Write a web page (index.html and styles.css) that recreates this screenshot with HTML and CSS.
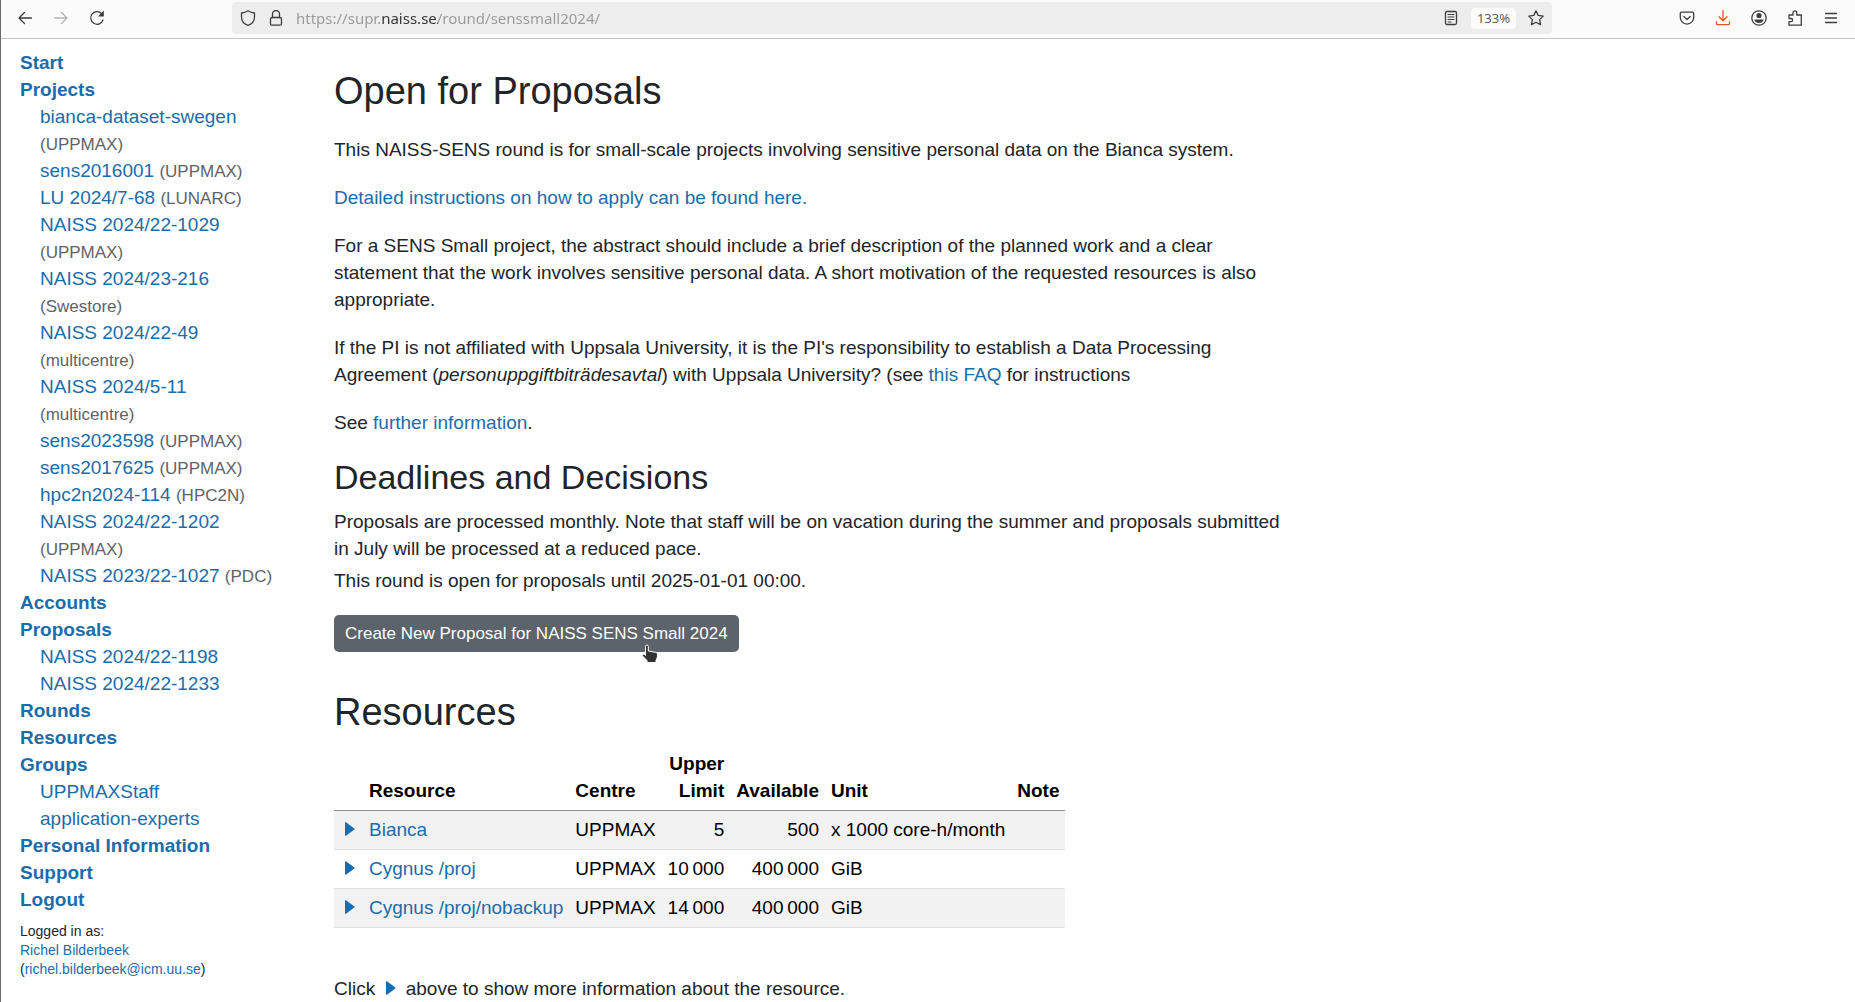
FILE: index.html
```html
<!DOCTYPE html>
<html lang="en">
<head>
    <meta charset="UTF-8">
    <meta name="viewport" content="width=device-width, initial-scale=1.0">
    <title>Open for Proposals</title>
    <link rel="stylesheet" href="styles.css">
</head>
<body>
    <header class="toolbar">
        <div class="nav-buttons">
            <button type="button" aria-label="Back"><svg viewBox="0 0 16 16"><path d="M14.500 8H2M7.500 2.500L2 8l5.500 5.500"/></svg></button>
            <button type="button" aria-label="Forward" disabled><svg viewBox="0 0 16 16"><path d="M1.500 8H14M8.500 2.500L14 8l-5.500 5.500"/></svg></button>
            <button type="button" aria-label="Reload"><svg viewBox="0 0 16 16"><path d="M14 10A6.300 6.300 0 1 1 12.500 3.500"/><path class="solid" d="M14.800.5v6H9z"/></svg></button>
        </div>
        <div class="urlbar">
            <svg viewBox="0 0 16 16"><path d="M8 .8c2 1.500 4 2 6.500 2.200v4c0 3.500-2.500 7-6.500 8.300C4 14 1.500 10.500 1.500 7V3C4 2.800 6 2.300 8 .8z"/></svg>
            <svg viewBox="0 0 16 16"><rect x="2.500" y="7.500" width="11" height="7.700" rx="1.500"/><path d="M4.500 7.500V4a3.500 3.500 0 0 1 7 0v3.500"/></svg>
            <input type="text" class="url" aria-label="Address" value="https://supr.naiss.se/round/senssmall2024/">
            <button type="button" aria-label="Reader view"><svg viewBox="0 0 16 16"><rect x="2.500" y="1.500" width="11" height="13" rx="1.500"/><path class="thin" d="M5 4.500h6M5 7h6M5 9.500h6M5 12h3"/></svg></button>
            <button type="button" class="zoom">133%</button>
            <button type="button" aria-label="Bookmark"><svg viewBox="0 0 16 16"><path d="M8 .8l2.200 4.600 5 .7-3.600 3.500.9 5L8 12.200l-4.500 2.400.9-5L.8 6.100l5-.7z"/></svg></button>
        </div>
        <div class="tools">
            <button type="button" aria-label="Save to Pocket"><svg viewBox="0 0 16 16"><path d="M2.500 2.200h11c.7 0 1.200.5 1.200 1.200v4a6.700 6.700 0 0 1-13.400 0v-4c0-.7.500-1.200 1.200-1.200zM4.800 6.500L8 9.500l3.200-3"/></svg></button>
            <button type="button" class="download" aria-label="Downloads"><svg viewBox="0 0 16 16"><path d="M8 .5v10M4 6.800l4 4 4-4M1.500 12v1.500c0 .8.500 1.200 1.200 1.200h10.600c.7 0 1.200-.4 1.200-1.200V12"/></svg></button>
            <button type="button" aria-label="Account"><svg viewBox="0 0 16 16"><circle cx="8" cy="8" r="7.200"/><circle class="solid" cx="8" cy="5.500" r="2.600"/><path class="solid" d="M3.500 9.500h9c0 2-2 3.500-4.500 3.500s-4.500-1.500-4.500-3.500z"/></svg></button>
            <button type="button" aria-label="Extensions"><svg viewBox="0 0 16 16"><path d="M2 15.200v-3.500h2a1.600 1.600 0 0 0 0-3.200H2V5h4V2.800a1.900 1.900 0 0 1 3.800 0V5h4.500v10.200z"/></svg></button>
            <button type="button" aria-label="Menu"><svg viewBox="0 0 16 16"><path d="M2.500 3.500h11M2.500 8h11M2.500 12.500h11"/></svg></button>
        </div>
    </header>

    <div class="page">
        <nav class="sidebar">
            <ul>
                <li><a href="#">Start</a></li>
                <li>
                    <a href="#">Projects</a>
                    <ul>
                        <li><a href="#">bianca-dataset-swegen</a> <small>(UPPMAX)</small></li>
                        <li><a href="#">sens2016001</a> <small>(UPPMAX)</small></li>
                        <li><a href="#">LU 2024/7-68</a> <small>(LUNARC)</small></li>
                        <li><a href="#">NAISS 2024/22-1029</a> <small>(UPPMAX)</small></li>
                        <li><a href="#">NAISS 2024/23-216</a> <small>(Swestore)</small></li>
                        <li><a href="#">NAISS 2024/22-49</a> <small>(multicentre)</small></li>
                        <li><a href="#">NAISS 2024/5-11</a> <small>(multicentre)</small></li>
                        <li><a href="#">sens2023598</a> <small>(UPPMAX)</small></li>
                        <li><a href="#">sens2017625</a> <small>(UPPMAX)</small></li>
                        <li><a href="#">hpc2n2024-114</a> <small>(HPC2N)</small></li>
                        <li><a href="#">NAISS 2024/22-1202</a> <small>(UPPMAX)</small></li>
                        <li><a href="#">NAISS 2023/22-1027</a> <small>(PDC)</small></li>
                    </ul>
                </li>
                <li><a href="#">Accounts</a></li>
                <li>
                    <a href="#">Proposals</a>
                    <ul>
                        <li><a href="#">NAISS 2024/22-1198</a></li>
                        <li><a href="#">NAISS 2024/22-1233</a></li>
                    </ul>
                </li>
                <li><a href="#">Rounds</a></li>
                <li><a href="#">Resources</a></li>
                <li>
                    <a href="#">Groups</a>
                    <ul>
                        <li><a href="#">UPPMAXStaff</a></li>
                        <li><a href="#">application-experts</a></li>
                    </ul>
                </li>
                <li><a href="#">Personal Information</a></li>
                <li><a href="#">Support</a></li>
                <li><a href="#">Logout</a></li>
            </ul>
            <div class="login">
                Logged in as:<br>
                <a href="#">Richel Bilderbeek</a><br>
                (<a href="#">richel.bilderbeek@icm.uu.se</a>)
            </div>
        </nav>

        <main class="content">
            <h1>Open for Proposals</h1>
            <p>This NAISS-SENS round is for small-scale projects involving sensitive personal data on the Bianca system.</p>
            <p><a href="#">Detailed instructions on how to apply can be found here.</a></p>
            <p>For a SENS Small project, the abstract should include a brief description of the planned work and a clear statement that the work involves sensitive personal data. A short motivation of the requested resources is also appropriate.</p>
            <p>If the PI is not affiliated with Uppsala University, it is the PI's responsibility to establish a Data Processing Agreement (<em>personuppgiftbiträdesavtal</em>) with Uppsala University? (see <a href="#">this FAQ</a> for instructions</p>
            <p>See <a href="#">further information</a>.</p>

            <h2>Deadlines and Decisions</h2>
            <p class="tight">Proposals are processed monthly. Note that staff will be on vacation during the summer and proposals submitted in July will be processed at a reduced pace.</p>
            <p>This round is open for proposals until 2025-01-01 00:00.</p>

            <button type="button" class="create">
                Create New Proposal for NAISS SENS Small 2024
                <svg class="pointer" viewBox="0 0 18 20"><path d="M4.500 2.200C4.500.6 7.300.6 7.300 2.200V7l7.200 1.300c1.400.3 2 1 2 2.400 0 2.500-.5 4-1.500 5.500V18.500H6v-2L1.500 12c-.8-1.200.8-2.400 2-1.500l1 1z"/></svg>
            </button>

            <h1>Resources</h1>
            <table class="resources">
                <thead>
                    <tr>
                        <th></th>
                        <th>Resource</th>
                        <th>Centre</th>
                        <th class="num">Upper<br>Limit</th>
                        <th class="num">Available</th>
                        <th>Unit</th>
                        <th>Note</th>
                    </tr>
                </thead>
                <tbody>
                    <tr>
                        <td><button type="button" class="expand" aria-label="Show Bianca"><svg class="caret" viewBox="0 0 10 14"><path d="M0 1Q0 0 1 .3L9.300 6.500q.6.500 0 1L1 13.700Q0 14 0 13z"/></svg></button></td>
                        <td><a href="#">Bianca</a></td>
                        <td>UPPMAX</td>
                        <td class="num">5</td>
                        <td class="num">500</td>
                        <td>x 1000 core-h/month</td>
                        <td></td>
                    </tr>
                    <tr>
                        <td><button type="button" class="expand" aria-label="Show Cygnus /proj"><svg class="caret" viewBox="0 0 10 14"><path d="M0 1Q0 0 1 .3L9.300 6.500q.6.500 0 1L1 13.700Q0 14 0 13z"/></svg></button></td>
                        <td><a href="#">Cygnus /proj</a></td>
                        <td>UPPMAX</td>
                        <td class="num">10&#8201;000</td>
                        <td class="num">400&#8201;000</td>
                        <td>GiB</td>
                        <td></td>
                    </tr>
                    <tr>
                        <td><button type="button" class="expand" aria-label="Show Cygnus /proj/nobackup"><svg class="caret" viewBox="0 0 10 14"><path d="M0 1Q0 0 1 .3L9.300 6.500q.6.500 0 1L1 13.700Q0 14 0 13z"/></svg></button></td>
                        <td><a href="#">Cygnus /proj/nobackup</a></td>
                        <td>UPPMAX</td>
                        <td class="num">14&#8201;000</td>
                        <td class="num">400&#8201;000</td>
                        <td>GiB</td>
                        <td></td>
                    </tr>
                </tbody>
            </table>
            <p class="hint">Click <svg class="caret" viewBox="0 0 10 14"><path d="M0 1Q0 0 1 .3L9.300 6.500q.6.500 0 1L1 13.700Q0 14 0 13z"/></svg> above to show more information about the resource.</p>
        </main>
    </div>
</body>
</html>
```

FILE: styles.css
```css
* {
    box-sizing: border-box;
}

body {
    margin: 0;
    height: 100vh;
    display: flex;
    flex-direction: column;
    overflow: hidden;
    border-left: 1px solid #6f696c;
    background-color: #fff;
    color: #212529;
    font-family: "Liberation Sans", Arial, sans-serif;
    font-size: 19px;
    line-height: 27px;
}

a {
    color: #1b6cab;
    text-decoration: none;
}

a:hover {
    text-decoration: underline;
}

button {
    padding: 0;
    border: none;
    background: none;
    color: inherit;
    font: inherit;
    cursor: pointer;
}

/* Browser toolbar */
.toolbar {
    flex: none;
    display: flex;
    align-items: center;
    height: 39px;
    padding-bottom: 2px;
    background-color: #fbfbfb;
    border-bottom: 1px solid #c4c4c4;
    color: #3d3d3d;
}

.toolbar svg {
    display: block;
    flex: none;
    width: 16px;
    height: 16px;
    fill: none;
    stroke: currentColor;
    stroke-width: 1.3;
    stroke-linecap: round;
    stroke-linejoin: round;
}

.toolbar .solid {
    fill: currentColor;
    stroke: none;
}

.toolbar .thin {
    stroke-width: 1;
}

.nav-buttons {
    display: flex;
    gap: 20px;
    width: 231px;
    padding-left: 16px;
}

.nav-buttons button:disabled {
    color: #b4b4b4;
}

.urlbar {
    flex: 1;
    display: flex;
    align-items: center;
    gap: 12px;
    height: 32px;
    padding: 0 8px;
    border-radius: 4px;
    background-color: #ededed;
}

/* The host name is darker than the rest of the address */
.url {
    flex: 1;
    min-width: 0;
    padding: 0;
    border: none;
    outline: none;
    background: linear-gradient(to right, #999 86px, #333 86px, #333 142px, #999 142px);
    background-clip: text;
    color: transparent;
    font-family: "Noto Sans", sans-serif;
    font-size: 15px;
}

.zoom {
    height: 21px;
    padding: 0 6px;
    border-radius: 4px;
    background-color: #fbfbfb;
    color: #5b5b5b;
    font-family: "Noto Sans", sans-serif;
    font-size: 13px;
    line-height: 21px;
}

.tools {
    display: flex;
    gap: 20px;
    padding: 0 16px 0 127px;
}

.download {
    color: #e95420;
}

/* Page */
.page {
    flex: 1;
    display: flex;
    min-height: 0;
}

.sidebar {
    flex: none;
    width: 313px;
    padding: 10px 35px 0 19px;
}

.sidebar ul {
    margin: 0;
    padding: 0;
    list-style: none;
    font-weight: bold;
}

.sidebar ul ul {
    padding-left: 20px;
    font-weight: normal;
}

.sidebar small {
    color: #5f6368;
    font-size: 17px;
    line-height: 1;
}

.login {
    margin-top: 9px;
    font-size: 14px;
    line-height: 19px;
}

.content {
    flex: 1;
    max-width: 980px;
    padding: 29px 0 0 20px;
}

h1,
h2 {
    font-weight: normal;
}

h1 {
    margin: 0 0 22px;
    font-size: 38px;
    line-height: 46px;
}

h2 {
    margin: 0 0 10px;
    font-size: 34px;
    line-height: 41px;
}

p {
    margin: 0 0 21px;
}

.tight {
    margin-bottom: 5px;
}

.create {
    position: relative;
    display: block;
    height: 37px;
    margin-bottom: 37px;
    padding: 0 11px;
    border-radius: 5px;
    background-color: #5c636a;
    color: #fff;
    font-size: 17px;
}

.pointer {
    position: absolute;
    left: 307px;
    bottom: -12px;
    width: 18px;
    height: 20px;
    fill: #333;
    stroke: #fff;
    stroke-width: 1;
}

.create + h1 {
    margin-bottom: 10px;
}

.resources {
    margin-bottom: 47px;
    border-collapse: collapse;
    color: #000;
}

.resources th,
.resources td {
    padding: 5px 6px 6px;
    border-bottom: 1px solid #dee2e6;
    text-align: left;
    vertical-align: bottom;
    white-space: nowrap;
}

.resources thead th {
    border-bottom-color: #909294;
}

.resources tbody tr:nth-child(odd) {
    background-color: #f2f2f2;
}

.resources .num {
    text-align: right;
}

.expand {
    display: block;
    padding: 0 2px 0 5px;
}

.caret {
    width: 10px;
    height: 14px;
    fill: #1b6cab;
}

.hint .caret {
    margin: 0 4px 0 6px;
}
```
